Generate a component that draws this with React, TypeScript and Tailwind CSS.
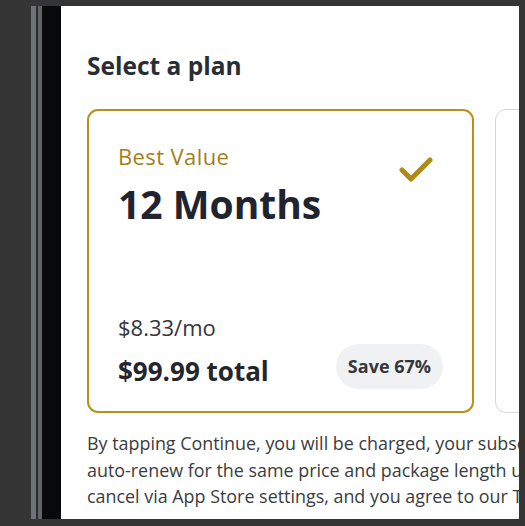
import React from 'react';

const Check: React.FC = () => (
  <svg width="34" height="28" viewBox="0 0 34 28" fill="none">
    <path d="M3 15 L12 24 L31 5" stroke="#b08a14" strokeWidth="5" strokeLinecap="round" strokeLinejoin="round" />
  </svg>
);

const App: React.FC = () => {
  return (
    <div className="w-[525px] h-[526px] bg-[#353535] flex overflow-hidden" style={{ fontFamily: '"Open Sans", Lato, sans-serif' }}>
      {/* phone edge */}
      <div className="flex mt-[6px] h-[513px] ml-[31px]">
        <div className="w-[5px] bg-[#6d7178]" />
        <div className="w-[2px] bg-[#2a2c30]" />
        <div className="w-[4px] bg-[#5f636a]" />
        <div className="w-[19px] bg-[#08090a]" />
      </div>

      {/* screen */}
      <div className="mt-[6px] h-[513px] w-[458px] bg-white overflow-hidden flex flex-col pl-[26px]">
        <h1 className="mt-[45px] text-[24.5px] leading-[30px] font-bold text-[#2a2d33]">Select a plan</h1>

        <div className="flex gap-[21px] mt-[28px]">
          <div className="w-[387px] h-[304px] shrink-0 rounded-[11px] border-2 border-[#b8901a] flex flex-col justify-between pl-[29px] pr-[29px] pt-[32px] pb-[24px]">
            <div className="flex justify-between">
              <div>
                <div className="text-[22px] leading-[26px] tracking-[0.4px] text-[#a27e1a]">Best Value</div>
                <div className="mt-[13px] text-[39px] leading-[44px] font-bold text-[#1f2430]">12 Months</div>
              </div>
              <div className="pt-[12px] pr-[10px]">
                <Check />
              </div>
            </div>

            <div className="flex justify-between items-end">
              <div>
                <div className="text-[22px] leading-[26px] text-[#33363b]">$8.33/mo</div>
                <div className="mt-[15px] text-[26px] leading-[32px] font-bold text-[#23262c]">$99.99 total</div>
              </div>
              <div className="mb-[-2px] h-[45px] px-[12px] rounded-full bg-[#f0f1f3] flex items-center text-[18px] font-bold text-[#33363b]">
                Save 67%
              </div>
            </div>
          </div>
          <div className="w-[200px] h-[304px] shrink-0 rounded-[11px] border border-[#d3d7dd]" />
        </div>

        <p className="mt-[17px] w-[500px] text-[17.9px] leading-[26.5px] text-[#3a3c40] whitespace-nowrap">
          By tapping Continue, you will be charged, your subscription will<br />
          auto-renew for the same price and package length until you<br />
          cancel via App Store settings, and you agree to our Terms.
        </p>
      </div>
    </div>
  );
};

export default App;
